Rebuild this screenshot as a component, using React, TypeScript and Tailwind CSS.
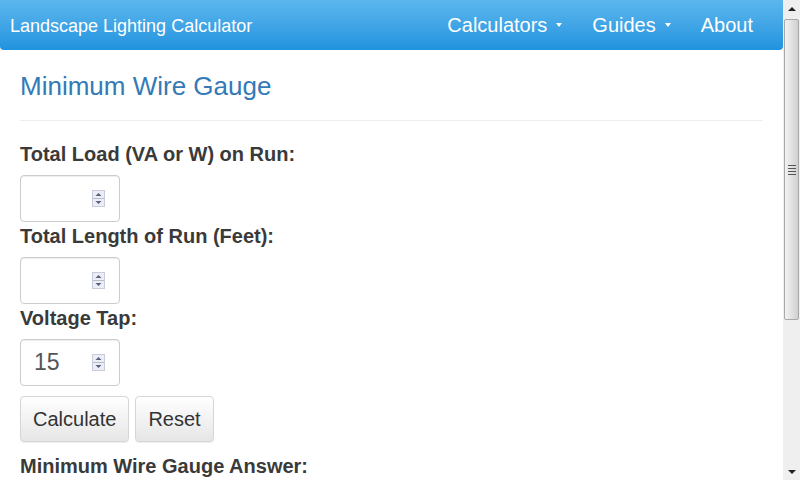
import React from "react";

const font = { fontFamily: '"Liberation Sans", Arial, sans-serif' };

function Caret() {
  return (
    <span className="ml-[9px] inline-block h-0 w-0 border-x-[3.5px] border-t-[4px] border-x-transparent border-t-white align-middle" />
  );
}

function Spinner() {
  return (
    <svg width="13" height="17" viewBox="0 0 13 17">
      <rect x="0.5" y="0.5" width="12" height="16" fill="#eceef6" stroke="#c9cbdb" />
      <line x1="1" y1="8.5" x2="12" y2="8.5" stroke="#b9bccf" />
      <polygon points="3.5,6 9.5,6 6.5,3" fill="#5b5f80" />
      <polygon points="3.5,11 9.5,11 6.5,14" fill="#5b5f80" />
    </svg>
  );
}

function NumberField({ value }: { value?: string }) {
  return (
    <div className="flex h-[47px] w-[100px] items-center justify-between rounded-[4px] border border-[#cccccc] bg-white pl-[13px] pr-[14px] shadow-[inset_0_1px_1px_rgba(0,0,0,0.075)]">
      <span className="text-[23px] leading-none text-[#555]">{value}</span>
      <Spinner />
    </div>
  );
}

function Field({ label, value }: { label: string; value?: string }) {
  return (
    <div>
      <div className="mb-[6px] text-[20px] font-bold leading-[29px] text-[#3a3a3a]">{label}</div>
      <NumberField value={value} />
    </div>
  );
}

function Scrollbar() {
  return (
    <div className="flex w-[17px] shrink-0 flex-col bg-[#efefef]">
      <div className="flex h-[17px] items-center justify-center">
        <span className="h-0 w-0 border-x-[4px] border-b-[4px] border-x-transparent border-b-[#222]" />
      </div>
      <div className="mx-[1px] mt-[2px] flex h-[301px] items-center justify-center rounded-[2px] border border-[#a8a8a8] bg-gradient-to-r from-[#f2f2f2] via-[#e2e2e2] to-[#cfcfcf]">
        <div className="flex flex-col gap-[2px]">
          <span className="h-[1px] w-[8px] bg-[#555]" />
          <span className="h-[1px] w-[8px] bg-[#555]" />
          <span className="h-[1px] w-[8px] bg-[#555]" />
          <span className="h-[1px] w-[8px] bg-[#555]" />
        </div>
      </div>
      <div className="flex-1" />
      <div className="flex h-[17px] items-center justify-center">
        <span className="h-0 w-0 border-x-[4px] border-t-[4px] border-x-transparent border-t-[#222]" />
      </div>
    </div>
  );
}

export default function App() {
  return (
    <div className="flex h-[480px] w-[800px] overflow-hidden bg-white" style={font}>
      <div className="flex min-w-0 flex-1 flex-col">
        <nav className="flex h-[50px] shrink-0 items-center justify-between rounded-b-[4px] bg-gradient-to-b from-[#5bb7ed] to-[#1f93df] pr-[15px] text-white">
          <span className="pl-[10px] pt-[1px] text-[18px] leading-[18px]">Landscape Lighting Calculator</span>
          <div className="flex items-center text-[20px] leading-[20px]">
            <span className="flex items-center px-[15px]">
              Calculators
              <Caret />
            </span>
            <span className="flex items-center px-[15px]">
              Guides
              <Caret />
            </span>
            <span className="px-[15px]">About</span>
          </div>
        </nav>

        <main className="px-5">
          <h1 className="mt-[22px] border-b border-[#eeeeee] pb-[20px] text-[26px] font-normal leading-[28px] text-[#337ab7]">
            Minimum Wire Gauge
          </h1>

          <div className="mt-[19px] flex flex-col">
            <Field label="Total Load (VA or W) on Run:" />
            <Field label="Total Length of Run (Feet):" />
            <Field label="Voltage Tap:" value="15" />
          </div>

          <div className="mt-[10px] flex gap-[6px]">
            <button className="h-[46px] rounded-[4px] border border-[#d6d6d6] bg-gradient-to-b from-white to-[#e6e6e6] px-[12px] text-[20px] text-[#333] shadow-[inset_0_1px_0_rgba(255,255,255,0.15),0_1px_1px_rgba(0,0,0,0.075)]">
              Calculate
            </button>
            <button className="h-[46px] rounded-[4px] border border-[#d6d6d6] bg-gradient-to-b from-white to-[#e6e6e6] px-[12px] text-[20px] text-[#333] shadow-[inset_0_1px_0_rgba(255,255,255,0.15),0_1px_1px_rgba(0,0,0,0.075)]">
              Reset
            </button>
          </div>

          <div className="mt-[10px] text-[20px] font-bold leading-[29px] text-[#3a3a3a]">Minimum Wire Gauge Answer:</div>
        </main>
      </div>
      <Scrollbar />
    </div>
  );
}
